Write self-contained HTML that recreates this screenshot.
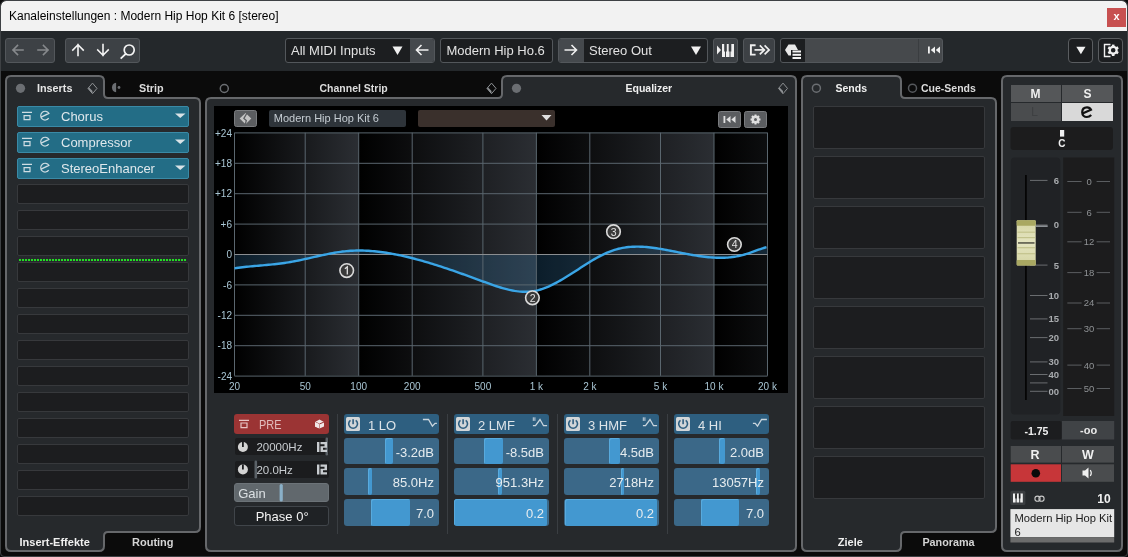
<!DOCTYPE html>
<html><head><meta charset="utf-8">
<style>
*{box-sizing:border-box;margin:0;padding:0}
html,body{width:1128px;height:557px;overflow:hidden;background:#0b0b0b;font-family:"Liberation Sans",sans-serif}
.a{position:absolute}
#root{position:absolute;left:0;top:0;width:1128px;height:557px;background:#0b0b0b;overflow:hidden;will-change:transform}
.tb{position:absolute;left:1px;top:1px;width:1126px;height:30px;background:#f2f2f2;border-radius:5px 5px 0 0}
.title{position:absolute;left:9px;top:9px;font-size:12px;color:#000;white-space:nowrap}
.close{position:absolute;left:1107px;top:8px;width:19px;height:19px;background:#c75050;color:#fff;font-size:11px;font-weight:bold;text-align:center;line-height:17px}
.toolbar{position:absolute;left:1px;top:31px;width:1126px;height:40px;background:#24282b}
.grp{position:absolute;top:38px;height:25px;border:1px solid #53575b;border-radius:3px;background:#3d4145;overflow:hidden}
.dk{background:#1c1e20}
.ttxt{position:absolute;top:4px;font-size:13px;color:#e2e2e2;white-space:nowrap}
.lbl{font-weight:bold;font-size:12px;color:#e6e6e6;position:absolute;white-space:nowrap}
.slot{position:absolute;left:17px;width:172px;height:20px;background:#1c1d1f;border:1px solid #37393c;border-radius:2px}
.ins{position:absolute;left:17px;width:172px;height:21px;background:#236d86;border:1px solid #3a8aa6;border-radius:2px;color:#dfe8ec;font-size:13px}
.send{position:absolute;left:813px;width:172px;height:43px;background:#1c1d1f;border:1px solid #37393c;border-radius:2px}
.bh{position:absolute;width:95px;height:20px;background:#2e5f80;border-radius:3px;color:#dde4e8;font-size:13px}
.sl{position:absolute;width:95px;height:26.5px;background:#3b6888;border-radius:3px;overflow:hidden;color:#e6ecef;font-size:13px}
.sl .v{position:absolute;right:5px;top:7px;white-space:nowrap}
.sl .h{position:absolute;top:0;height:26.5px;background:#4398d0;border-radius:2px;box-shadow:inset 1px 1px 0 #58aadd}
</style></head><body>
<div id="root">
<!-- title bar -->
<div class="tb"></div>
<div class="title">Kanaleinstellungen : Modern Hip Hop Kit 6 [stereo]</div>
<div class="close">x</div>
<!-- toolbar -->
<div class="toolbar"></div>

<div class="grp" style="left:5px;width:50px"></div>
<div class="grp" style="left:65px;width:75px"></div>
<svg class="a" style="left:0;top:31px" width="1128" height="40">
 <g fill="none" stroke-width="1.6" stroke-linecap="square">
  <g stroke="#86898c">
   <path d="M13 19 H23 M17.5 14.5 L13 19 L17.5 23.5"/>
   <path d="M38 19 H48 M43.5 14.5 L48 19 L43.5 23.5"/>
  </g>
  <g stroke="#f4f4f4">
   <path d="M78 13.5 V24.5 M72.8 19 L78 13.8 L83.2 19"/>
   <path d="M103 13.5 V24.5 M97.8 19 L103 24.2 L108.2 19"/>
   <circle cx="129.2" cy="19" r="5" stroke-width="1.7"/>
   <path d="M125.5 23 L121.3 27" stroke-width="1.8"/>
  </g>
 </g>
</svg>
<div class="grp dk" style="left:285px;width:150px"><div class="a" style="left:124px;top:0;width:25px;height:23px;background:#45494d"></div></div>
<div class="ttxt" style="left:291px;top:43px">All MIDI Inputs</div>
<div class="grp dk" style="left:440px;width:113px"></div>
<div class="ttxt" style="left:446.5px;top:43px">Modern Hip Ho.6</div>
<div class="grp dk" style="left:558px;width:150px"><div class="a" style="left:0;top:0;width:25px;height:23px;background:#45494d"></div></div>
<div class="ttxt" style="left:589px;top:43px">Stereo Out</div>
<div class="grp" style="left:713px;width:25px"></div>
<div class="grp" style="left:743px;width:32px"></div>
<div class="grp" style="left:780px;width:163px;background:#46494c"><div class="a" style="left:0;top:0;width:24px;height:23px;background:#1c1e20"></div><div class="a" style="left:137px;top:0;width:1px;height:23px;background:#3a3d40"></div></div>
<div class="grp dk" style="left:1068px;width:25px;border-color:#5a5d60;border-radius:4px"></div>
<div class="grp dk" style="left:1098px;width:25px;border-color:#5a5d60;border-radius:4px"></div>
<svg class="a" style="left:0;top:31px" width="1128" height="40">
 <g fill="#f0f0f0">
  <path d="M392.5 15.5 H402.5 L397.5 24 Z"/>
  <path d="M691 15.5 H701 L696 24 Z"/>
  <path d="M1076.3 15.8 H1085.5 L1080.9 23.3 Z"/>
 </g>
 <g fill="none" stroke="#f0f0f0" stroke-width="1.6">
  <path d="M416.5 19 H428.5 M421.5 14 L416.5 19 L421.5 24"/>
  <path d="M564.5 19 H576.5 M571.5 14 L576.5 19 L571.5 24"/>
 </g>
 <g fill="#f0f0f0">
  <path d="M717 14.5 L721 19 L717 23.5 Z"/>
  <rect x="722" y="13" width="3" height="13"/>
  <rect x="726" y="13" width="3.5" height="13"/>
  <rect x="730.5" y="13" width="3.5" height="13"/>
 </g>
 <g fill="#3d4145">
  <rect x="724.2" y="13" width="2.6" height="7.5"/>
  <rect x="728.7" y="13" width="2.6" height="7.5"/>
 </g>
 <g fill="none" stroke="#f0f0f0" stroke-width="1.9">
  <path d="M755.6 14.3 H750.9 V23.6 H755.6"/>
  <path d="M754.5 18.9 H764.5" stroke-width="1.7"/>
  <path d="M759.8 14.4 L764.3 18.9 L759.8 23.4 M764.6 14.4 L769.1 18.9 L764.6 23.4" stroke-width="1.7"/>
 </g>
 <g>
  <path d="M785 19 L788.5 13.5 H795 L798 19 L795 24.5 H788.5 Z" fill="#e8e8e8"/>
  <rect x="791" y="19" width="11" height="10" fill="#1c1e20"/>
  <g fill="#f4f4f4"><rect x="792.5" y="19.5" width="8.5" height="2"/><rect x="792.5" y="22.8" width="8.5" height="2"/><rect x="792.5" y="26" width="8.5" height="2"/></g>
 </g>
 <g fill="#f0f0f0">
  <rect x="928" y="15.5" width="1.8" height="7"/>
  <path d="M935 15.5 V22.5 L930.8 19 Z M940 15.5 V22.5 L935.8 19 Z"/>
 </g>
 <g fill="none" stroke="#f0f0f0" stroke-width="1.4">
  <path d="M1110.5 13.5 H1104.5 V25.5 H1110.5"/>
 </g>
 <g transform="translate(1113.2 19.3)">
  <circle r="3.4" fill="none" stroke="#f0f0f0" stroke-width="2.2"/>
  <g fill="#f0f0f0"><rect x="-1.3" y="-5.7" width="2.6" height="2.6" transform="rotate(0)"/><rect x="-1.3" y="-5.7" width="2.6" height="2.6" transform="rotate(60)"/><rect x="-1.3" y="-5.7" width="2.6" height="2.6" transform="rotate(120)"/><rect x="-1.3" y="-5.7" width="2.6" height="2.6" transform="rotate(180)"/><rect x="-1.3" y="-5.7" width="2.6" height="2.6" transform="rotate(240)"/><rect x="-1.3" y="-5.7" width="2.6" height="2.6" transform="rotate(300)"/></g>
 </g>
</svg>

<!-- panel outlines -->
<svg class="a" style="left:0;top:0" width="1128" height="557">
 <g fill="#26292c" stroke="#66686b" stroke-width="2">
  <!-- left inserts panel -->
  <path d="M6 81 Q6 76 11 76 L99 76 Q104 76 104 81 L104 94 Q104 98 108 98 L195 98 Q200 98 200 103 L200 527 Q200 532 195 532 L108 532 Q104 532 104 536 L104 546 Q104 551 99 551 L11 551 Q6 551 6 546 Z"/>
  <!-- EQ panel -->
  <path d="M206 103 Q206 98 211 98 L498 98 Q502 98 502 94 L502 81 Q502 76 507 76 L791 76 Q796 76 796 81 L796 546 Q796 551 791 551 L211 551 Q206 551 206 546 Z"/>
  <!-- sends panel -->
  <path d="M802 81 Q802 76 807 76 L896 76 Q901 76 901 81 L901 94 Q901 98 905 98 L991 98 Q996 98 996 103 L996 527 Q996 532 991 532 L905 532 Q901 532 901 536 L901 546 Q901 551 896 551 L807 551 Q802 551 802 546 Z"/>
  <!-- channel panel -->
  <path d="M1002 81 Q1002 76 1007 76 L1117 76 Q1122 76 1122 81 L1122 546 Q1122 551 1117 551 L1007 551 Q1002 551 1002 546 Z"/>
 </g>
</svg>

<!-- left panel content -->
<svg class="a" style="left:0;top:0" width="210" height="557">
 <circle cx="20.5" cy="88.3" r="4.6" fill="#6b6e72"/>
 <g transform="translate(92.5 88.4)"><path d="M0 -5.3 L4.5 0 L0 5.3 L-4.5 0 Z" fill="none" stroke="#8e9194" stroke-width="1"/><path d="M-4.5 0 L0 5.3 L0 2.6 L-3.6 -1.1 Z" fill="#8e9194"/></g>
 <path d="M116.1 82.7 A4.8 4.8 0 0 0 116.1 92.2 Z" fill="#6b6e72"/>
 <circle cx="119" cy="87.5" r="1.4" fill="#6b6e72"/>
</svg>
<div class="lbl" style="left:37px;top:82px;font-size:10.8px">Inserts</div>
<div class="lbl" style="left:139px;top:82px;font-size:10.8px;color:#dcdcdc">Strip</div>
<div class="ins" style="top:106px"><div class="a" style="left:43px;top:2px">Chorus</div></div>
<div class="ins" style="top:132px"><div class="a" style="left:43px;top:2px">Compressor</div></div>
<div class="ins" style="top:158px"><div class="a" style="left:43px;top:2px">StereoEnhancer</div></div>
<svg class="a" style="left:0;top:0" width="210" height="557"><g fill="none" stroke="#cfdde3" stroke-width="1.2"><path d="M22 112.4 H32 M24.1 115.6 H30 V119.6 H24.1 Z"/><path d="M40.6 117.4 L48.9 113.4 A4.4 4.4 0 1 0 48.7 118.2"/><path d="M22 138.4 H32 M24.1 141.6 H30 V145.6 H24.1 Z"/><path d="M40.6 143.4 L48.9 139.4 A4.4 4.4 0 1 0 48.7 144.2"/><path d="M22 164.4 H32 M24.1 167.6 H30 V171.6 H24.1 Z"/><path d="M40.6 169.4 L48.9 165.4 A4.4 4.4 0 1 0 48.7 170.2"/></g><g fill="#d9e3e7"><path d="M175 113.5 H185.5 L180.25 118 Z"/><path d="M175 139.5 H185.5 L180.25 144 Z"/><path d="M175 165.5 H185.5 L180.25 170 Z"/></g></svg>
<div class="slot" style="top:184px"></div>
<div class="slot" style="top:210px"></div>
<div class="slot" style="top:236px"></div>
<div class="slot" style="top:262px"></div>
<div class="slot" style="top:288px"></div>
<div class="slot" style="top:314px"></div>
<div class="slot" style="top:340px"></div>
<div class="slot" style="top:366px"></div>
<div class="slot" style="top:392px"></div>
<div class="slot" style="top:418px"></div>
<div class="slot" style="top:444px"></div>
<div class="slot" style="top:470px"></div>
<div class="slot" style="top:496px"></div>
<div class="a" style="left:19px;top:259px;width:168px;height:2px;background:repeating-linear-gradient(90deg,#22e022 0 1.5px,transparent 1.5px 3px)"></div>
<div class="lbl" style="left:19.5px;top:536px;font-size:11px;color:#f0f0f0">Insert-Effekte</div>
<div class="lbl" style="left:132px;top:536px;font-size:11px;color:#d4d4d4">Routing</div>

<!-- EQ -->
<svg class="a" style="left:0;top:0" width="1128" height="557">
<defs><linearGradient id="dg" x1="0" x2="1" y1="0" y2="0"><stop offset="0" stop-color="#000"/><stop offset="1" stop-color="#2b2e33"/></linearGradient></defs>
<rect x="214" y="106" width="574" height="287" fill="#000"/>
<svg x="234.5" y="132.7" width="533.0" height="243.1" overflow="hidden"><rect x="0.0" y="0" width="124.2" height="243.1" fill="url(#dg)"/><rect x="124.2" y="0" width="177.7" height="243.1" fill="url(#dg)"/><rect x="301.9" y="0" width="177.7" height="243.1" fill="url(#dg)"/><rect x="479.5" y="0" width="177.7" height="243.1" fill="url(#dg)"/></svg>
<path d="M234.5 268.33 L236.5 268.03 L238.5 267.75 L240.5 267.49 L242.5 267.25 L244.5 267.02 L246.5 266.80 L248.5 266.60 L250.5 266.40 L252.5 266.22 L254.5 266.04 L256.5 265.86 L258.5 265.69 L260.5 265.51 L262.5 265.34 L264.5 265.17 L266.5 264.99 L268.5 264.81 L270.5 264.62 L272.5 264.42 L274.5 264.21 L276.5 263.99 L278.5 263.76 L280.5 263.51 L282.5 263.24 L284.5 262.96 L286.5 262.66 L288.5 262.33 L290.5 261.99 L292.5 261.63 L294.5 261.26 L296.5 260.87 L298.5 260.47 L300.5 260.06 L302.5 259.63 L304.5 259.20 L306.5 258.76 L308.5 258.31 L310.5 257.86 L312.5 257.40 L314.5 256.94 L316.5 256.49 L318.5 256.04 L320.5 255.59 L322.5 255.15 L324.5 254.72 L326.5 254.30 L328.5 253.89 L330.5 253.50 L332.5 253.12 L334.5 252.76 L336.5 252.43 L338.5 252.11 L340.5 251.82 L342.5 251.56 L344.5 251.32 L346.5 251.12 L348.5 250.94 L350.5 250.80 L352.5 250.69 L354.5 250.60 L356.5 250.55 L358.5 250.52 L360.5 250.53 L362.5 250.56 L364.5 250.61 L366.5 250.70 L368.5 250.80 L370.5 250.94 L372.5 251.09 L374.5 251.27 L376.5 251.47 L378.5 251.70 L380.5 251.94 L382.5 252.21 L384.5 252.50 L386.5 252.80 L388.5 253.13 L390.5 253.47 L392.5 253.83 L394.5 254.21 L396.5 254.60 L398.5 255.01 L400.5 255.43 L402.5 255.87 L404.5 256.32 L406.5 256.79 L408.5 257.27 L410.5 257.76 L412.5 258.26 L414.5 258.78 L416.5 259.31 L418.5 259.85 L420.5 260.40 L422.5 260.96 L424.5 261.54 L426.5 262.12 L428.5 262.71 L430.5 263.32 L432.5 263.93 L434.5 264.55 L436.5 265.18 L438.5 265.82 L440.5 266.47 L442.5 267.12 L444.5 267.78 L446.5 268.45 L448.5 269.12 L450.5 269.80 L452.5 270.49 L454.5 271.18 L456.5 271.88 L458.5 272.58 L460.5 273.29 L462.5 274.00 L464.5 274.71 L466.5 275.43 L468.5 276.15 L470.5 276.88 L472.5 277.60 L474.5 278.33 L476.5 279.06 L478.5 279.80 L480.5 280.53 L482.5 281.26 L484.5 282.00 L486.5 282.73 L488.5 283.46 L490.5 284.17 L492.5 284.88 L494.5 285.57 L496.5 286.24 L498.5 286.88 L500.5 287.50 L502.5 288.10 L504.5 288.66 L506.5 289.18 L508.5 289.67 L510.5 290.11 L512.5 290.51 L514.5 290.86 L516.5 291.16 L518.5 291.40 L520.5 291.58 L522.5 291.71 L524.5 291.76 L526.5 291.75 L528.5 291.67 L530.5 291.51 L532.5 291.28 L534.5 290.96 L536.5 290.56 L538.5 290.07 L540.5 289.51 L542.5 288.87 L544.5 288.16 L546.5 287.38 L548.5 286.54 L550.5 285.64 L552.5 284.69 L554.5 283.69 L556.5 282.64 L558.5 281.54 L560.5 280.41 L562.5 279.24 L564.5 278.05 L566.5 276.82 L568.5 275.57 L570.5 274.31 L572.5 273.03 L574.5 271.74 L576.5 270.44 L578.5 269.14 L580.5 267.84 L582.5 266.55 L584.5 265.27 L586.5 264.00 L588.5 262.74 L590.5 261.51 L592.5 260.31 L594.5 259.13 L596.5 257.99 L598.5 256.89 L600.5 255.82 L602.5 254.81 L604.5 253.84 L606.5 252.93 L608.5 252.07 L610.5 251.28 L612.5 250.55 L614.5 249.89 L616.5 249.30 L618.5 248.78 L620.5 248.32 L622.5 247.92 L624.5 247.58 L626.5 247.29 L628.5 247.06 L630.5 246.89 L632.5 246.76 L634.5 246.68 L636.5 246.64 L638.5 246.65 L640.5 246.70 L642.5 246.79 L644.5 246.91 L646.5 247.06 L648.5 247.25 L650.5 247.47 L652.5 247.71 L654.5 247.98 L656.5 248.27 L658.5 248.58 L660.5 248.90 L662.5 249.25 L664.5 249.60 L666.5 249.97 L668.5 250.35 L670.5 250.73 L672.5 251.12 L674.5 251.52 L676.5 251.92 L678.5 252.32 L680.5 252.72 L682.5 253.11 L684.5 253.51 L686.5 253.89 L688.5 254.27 L690.5 254.64 L692.5 255.00 L694.5 255.34 L696.5 255.67 L698.5 255.98 L700.5 256.28 L702.5 256.55 L704.5 256.80 L706.5 257.03 L708.5 257.23 L710.5 257.40 L712.5 257.54 L714.5 257.66 L716.5 257.74 L718.5 257.78 L720.5 257.79 L722.5 257.76 L724.5 257.69 L726.5 257.58 L728.5 257.43 L730.5 257.23 L732.5 256.98 L734.5 256.69 L736.5 256.36 L738.5 255.97 L740.5 255.53 L742.5 255.05 L744.5 254.51 L746.5 253.92 L748.5 253.28 L750.5 252.60 L752.5 251.88 L754.5 251.16 L756.5 250.43 L758.5 249.71 L760.5 249.02 L762.5 248.36 L764.5 247.76 L766.5 247.21 L767.5 254.5 L234.5 254.5 Z" fill="rgba(60,150,215,0.2)"/>
<path d="M234.5 132.9 H767.5 M234.5 163.3 H767.5 M234.5 193.7 H767.5 M234.5 224.1 H767.5 M234.5 284.9 H767.5 M234.5 315.3 H767.5 M234.5 345.7 H767.5 M234.5 376.1 H767.5 M234.5 132.7 V375.8 M305.2 132.7 V375.8 M358.7 132.7 V375.8 M412.2 132.7 V375.8 M482.9 132.7 V375.8 M536.4 132.7 V375.8 M589.8 132.7 V375.8 M660.5 132.7 V375.8 M714.0 132.7 V375.8 M767.5 132.7 V375.8" stroke="#5a666e" stroke-width="1" fill="none"/>
<path d="M234.5 254.5 H767.5" stroke="#8b8e91" stroke-width="1.2"/>
<path d="M234.5 268.33 L236.5 268.03 L238.5 267.75 L240.5 267.49 L242.5 267.25 L244.5 267.02 L246.5 266.80 L248.5 266.60 L250.5 266.40 L252.5 266.22 L254.5 266.04 L256.5 265.86 L258.5 265.69 L260.5 265.51 L262.5 265.34 L264.5 265.17 L266.5 264.99 L268.5 264.81 L270.5 264.62 L272.5 264.42 L274.5 264.21 L276.5 263.99 L278.5 263.76 L280.5 263.51 L282.5 263.24 L284.5 262.96 L286.5 262.66 L288.5 262.33 L290.5 261.99 L292.5 261.63 L294.5 261.26 L296.5 260.87 L298.5 260.47 L300.5 260.06 L302.5 259.63 L304.5 259.20 L306.5 258.76 L308.5 258.31 L310.5 257.86 L312.5 257.40 L314.5 256.94 L316.5 256.49 L318.5 256.04 L320.5 255.59 L322.5 255.15 L324.5 254.72 L326.5 254.30 L328.5 253.89 L330.5 253.50 L332.5 253.12 L334.5 252.76 L336.5 252.43 L338.5 252.11 L340.5 251.82 L342.5 251.56 L344.5 251.32 L346.5 251.12 L348.5 250.94 L350.5 250.80 L352.5 250.69 L354.5 250.60 L356.5 250.55 L358.5 250.52 L360.5 250.53 L362.5 250.56 L364.5 250.61 L366.5 250.70 L368.5 250.80 L370.5 250.94 L372.5 251.09 L374.5 251.27 L376.5 251.47 L378.5 251.70 L380.5 251.94 L382.5 252.21 L384.5 252.50 L386.5 252.80 L388.5 253.13 L390.5 253.47 L392.5 253.83 L394.5 254.21 L396.5 254.60 L398.5 255.01 L400.5 255.43 L402.5 255.87 L404.5 256.32 L406.5 256.79 L408.5 257.27 L410.5 257.76 L412.5 258.26 L414.5 258.78 L416.5 259.31 L418.5 259.85 L420.5 260.40 L422.5 260.96 L424.5 261.54 L426.5 262.12 L428.5 262.71 L430.5 263.32 L432.5 263.93 L434.5 264.55 L436.5 265.18 L438.5 265.82 L440.5 266.47 L442.5 267.12 L444.5 267.78 L446.5 268.45 L448.5 269.12 L450.5 269.80 L452.5 270.49 L454.5 271.18 L456.5 271.88 L458.5 272.58 L460.5 273.29 L462.5 274.00 L464.5 274.71 L466.5 275.43 L468.5 276.15 L470.5 276.88 L472.5 277.60 L474.5 278.33 L476.5 279.06 L478.5 279.80 L480.5 280.53 L482.5 281.26 L484.5 282.00 L486.5 282.73 L488.5 283.46 L490.5 284.17 L492.5 284.88 L494.5 285.57 L496.5 286.24 L498.5 286.88 L500.5 287.50 L502.5 288.10 L504.5 288.66 L506.5 289.18 L508.5 289.67 L510.5 290.11 L512.5 290.51 L514.5 290.86 L516.5 291.16 L518.5 291.40 L520.5 291.58 L522.5 291.71 L524.5 291.76 L526.5 291.75 L528.5 291.67 L530.5 291.51 L532.5 291.28 L534.5 290.96 L536.5 290.56 L538.5 290.07 L540.5 289.51 L542.5 288.87 L544.5 288.16 L546.5 287.38 L548.5 286.54 L550.5 285.64 L552.5 284.69 L554.5 283.69 L556.5 282.64 L558.5 281.54 L560.5 280.41 L562.5 279.24 L564.5 278.05 L566.5 276.82 L568.5 275.57 L570.5 274.31 L572.5 273.03 L574.5 271.74 L576.5 270.44 L578.5 269.14 L580.5 267.84 L582.5 266.55 L584.5 265.27 L586.5 264.00 L588.5 262.74 L590.5 261.51 L592.5 260.31 L594.5 259.13 L596.5 257.99 L598.5 256.89 L600.5 255.82 L602.5 254.81 L604.5 253.84 L606.5 252.93 L608.5 252.07 L610.5 251.28 L612.5 250.55 L614.5 249.89 L616.5 249.30 L618.5 248.78 L620.5 248.32 L622.5 247.92 L624.5 247.58 L626.5 247.29 L628.5 247.06 L630.5 246.89 L632.5 246.76 L634.5 246.68 L636.5 246.64 L638.5 246.65 L640.5 246.70 L642.5 246.79 L644.5 246.91 L646.5 247.06 L648.5 247.25 L650.5 247.47 L652.5 247.71 L654.5 247.98 L656.5 248.27 L658.5 248.58 L660.5 248.90 L662.5 249.25 L664.5 249.60 L666.5 249.97 L668.5 250.35 L670.5 250.73 L672.5 251.12 L674.5 251.52 L676.5 251.92 L678.5 252.32 L680.5 252.72 L682.5 253.11 L684.5 253.51 L686.5 253.89 L688.5 254.27 L690.5 254.64 L692.5 255.00 L694.5 255.34 L696.5 255.67 L698.5 255.98 L700.5 256.28 L702.5 256.55 L704.5 256.80 L706.5 257.03 L708.5 257.23 L710.5 257.40 L712.5 257.54 L714.5 257.66 L716.5 257.74 L718.5 257.78 L720.5 257.79 L722.5 257.76 L724.5 257.69 L726.5 257.58 L728.5 257.43 L730.5 257.23 L732.5 256.98 L734.5 256.69 L736.5 256.36 L738.5 255.97 L740.5 255.53 L742.5 255.05 L744.5 254.51 L746.5 253.92 L748.5 253.28 L750.5 252.60 L752.5 251.88 L754.5 251.16 L756.5 250.43 L758.5 249.71 L760.5 249.02 L762.5 248.36 L764.5 247.76 L766.5 247.21" stroke="#3aa5e6" stroke-width="2.4" stroke-linejoin="round" fill="none"/>
<g font-family="Liberation Sans" font-size="10" fill="#a9c6d4" text-anchor="end">
<text x="232" y="136.5">+24</text>
<text x="232" y="166.9">+18</text>
<text x="232" y="197.3">+12</text>
<text x="232" y="227.7">+6</text>
<text x="232" y="258.1">0</text>
<text x="232" y="288.5">-6</text>
<text x="232" y="318.9">-12</text>
<text x="232" y="349.3">-18</text>
<text x="232" y="379.7">-24</text>
</g><g font-family="Liberation Sans" font-size="10" fill="#a9c6d4" text-anchor="middle">
<text x="234.5" y="390">20</text>
<text x="305.2" y="390">50</text>
<text x="358.7" y="390">100</text>
<text x="412.2" y="390">200</text>
<text x="482.9" y="390">500</text>
<text x="536.4" y="390">1 k</text>
<text x="589.8" y="390">2 k</text>
<text x="660.5" y="390">5 k</text>
<text x="714.0" y="390">10 k</text>
<text x="767.5" y="390">20 k</text>
</g>
<circle cx="346.7" cy="270.6" r="6.8" fill="#3a3a3a" stroke="#dadada" stroke-width="1.6"/><path d="M344.9 268.8 L347.3 266.8 V274.6" stroke="#e2e2e2" stroke-width="1.3" fill="none"/>
<circle cx="532.4" cy="297.8" r="6.8" fill="#3a3a3a" stroke="#dadada" stroke-width="1.6"/><text x="532.6" y="301.6" font-family="Liberation Sans" font-size="10.5" fill="#e2e2e2" text-anchor="middle">2</text>
<circle cx="613.5" cy="231.7" r="6.8" fill="#3a3a3a" stroke="#dadada" stroke-width="1.6"/><text x="613.7" y="235.5" font-family="Liberation Sans" font-size="10.5" fill="#e2e2e2" text-anchor="middle">3</text>
<circle cx="734.4" cy="244.5" r="6.8" fill="#3a3a3a" stroke="#dadada" stroke-width="1.6"/><text x="734.6" y="248.3" font-family="Liberation Sans" font-size="10.5" fill="#e2e2e2" text-anchor="middle">4</text>
<rect x="234.5" y="110.5" width="22" height="16" rx="2" fill="#5b5d60" stroke="#7a7c7f"/>
<path d="M245.6 112.9 L251.3 118.5 L245.6 124.2 L239.6 118.5 Z" fill="#c4c4c4"/><path d="M247.3 112.5 L243.9 118.4 L246.3 120.4 L245.2 124.8" stroke="#5b5d60" stroke-width="1.3" fill="none"/>
<rect x="269" y="110" width="137" height="17" rx="2" fill="#2e343a"/>
<rect x="418" y="110" width="137" height="17" rx="2" fill="#3a302c"/>
<path d="M541.5 115 H551.5 L546.5 120.5 Z" fill="#e0e0e0"/>
<rect x="718.5" y="111.5" width="22" height="16" rx="2" fill="#5b5d60" stroke="#7a7c7f"/>
<rect x="744.5" y="111.5" width="22" height="16" rx="2" fill="#5b5d60" stroke="#7a7c7f"/>
<g fill="#e0e0e0"><rect x="723.5" y="116" width="1.8" height="7"/><path d="M730.5 116 V123 L726.3 119.5 Z M735.5 116 V123 L731.3 119.5 Z"/></g>
<g transform="translate(755.5 119.5)"><circle r="3.2" fill="none" stroke="#e0e0e0" stroke-width="1.6"/><g fill="#e0e0e0"><rect x="-1" y="-5" width="2" height="10"/><rect x="-1" y="-5" width="2" height="10" transform="rotate(45)"/><rect x="-1" y="-5" width="2" height="10" transform="rotate(90)"/><rect x="-1" y="-5" width="2" height="10" transform="rotate(135)"/></g><circle r="1.5" fill="#5b5d60"/></g>
<circle cx="224.3" cy="88.5" r="4" fill="none" stroke="#6b6e72" stroke-width="1.5"/>
<circle cx="516.5" cy="88.3" r="4.6" fill="#6b6e72"/>
<g transform="translate(491.5 88.4)"><path d="M0 -5.3 L4.5 0 L0 5.3 L-4.5 0 Z" fill="none" stroke="#8e9194" stroke-width="1"/><path d="M-4.5 0 L0 5.3 L0 2.6 L-3.6 -1.1 Z" fill="#8e9194"/></g>
<g transform="translate(783 88.4)"><path d="M0 -5.3 L4.5 0 L0 5.3 L-4.5 0 Z" fill="none" stroke="#8e9194" stroke-width="1"/><path d="M-4.5 0 L0 5.3 L0 2.6 L-3.6 -1.1 Z" fill="#8e9194"/></g>
</svg>
<div class="lbl" style="left:319.5px;top:82px;font-size:10.5px;color:#dcdcdc">Channel Strip</div>
<div class="lbl" style="left:625.5px;top:82px;font-size:10.5px;color:#f0f0f0">Equalizer</div>
<div class="a" style="left:273.8px;top:112px;font-size:11px;color:#c5ccd2;white-space:nowrap">Modern Hip Hop Kit 6</div>
<!-- EQ bottom -->
<svg class="a" style="left:0;top:0" width="1128" height="557">
<rect x="337.0" y="414" width="1" height="120" fill="#3a3e42"/>
<rect x="447.0" y="414" width="1" height="120" fill="#3a3e42"/>
<rect x="557.0" y="414" width="1" height="120" fill="#3a3e42"/>
<rect x="667.0" y="414" width="1" height="120" fill="#3a3e42"/>
<rect x="234" y="414" width="95" height="20" rx="3" fill="#9b3434"/>
<g fill="none" stroke="#e8c4c4" stroke-width="1.2"><path d="M239 420.4 H249 M241 423 H247 V427.6 H241 Z"/></g>
<g transform="translate(319.5 424)"><path d="M0 -4.5 L4.5 -2 L4.5 2.5 L0 4.5 L-4.5 2.5 L-4.5 -2 Z" fill="#f0e8e8"/><path d="M-4.5 -2 L0 0 L4.5 -2 M0 0 V4.5" stroke="#9b3434" stroke-width="1" fill="none"/><path d="M-4.5 -2 L0 0 L0 4.5 L-4.5 2.5 Z" fill="#f0e8e8"/></g>
<rect x="235" y="438" width="94" height="17" rx="2" fill="#1b1c1e"/>
<rect x="235" y="461" width="94" height="17" rx="2" fill="#1b1c1e"/>
<rect x="325.5" y="437.5" width="2.6" height="18" rx="1.3" fill="#5a6167"/>
<rect x="254.5" y="460.5" width="2.6" height="18" rx="1.3" fill="#5a6167"/>
<circle cx="242.9" cy="447" r="5" fill="#d4d4d4"/><rect x="242" y="442" width="1.8" height="5" fill="#1b1c1e"/>
<g fill="#c8ccd0"><rect x="317" y="442" width="2.4" height="10"/><path d="M320.5 442 H327 V447.8 H323 V449.8 H327 V452 H320.5 V446.2 H324.5 V444.2 H320.5 Z"/></g>
<circle cx="242.9" cy="469.5" r="5" fill="#d4d4d4"/><rect x="242" y="464.5" width="1.8" height="5" fill="#1b1c1e"/>
<g fill="#c8ccd0"><rect x="317" y="464.5" width="2.4" height="10"/><path d="M320.5 464.5 H327 V470.3 H323 V472.3 H327 V474.5 H320.5 V468.7 H324.5 V466.7 H320.5 Z"/></g>
<rect x="234.5" y="483.5" width="94" height="18" rx="2.5" fill="#61686d" stroke="#6c7378"/>
<rect x="279.6" y="484" width="3.2" height="17.5" rx="1.5" fill="#8ab0c8"/>
<rect x="234.5" y="506.5" width="94" height="19" rx="2.5" fill="#1f2225" stroke="#40454a"/>
<rect x="344" y="414" width="95" height="20" rx="3" fill="#2e5f80"/>
<rect x="346" y="417" width="14" height="14" rx="1.5" fill="#d2d6d8"/>

<rect x="454" y="414" width="95" height="20" rx="3" fill="#2e5f80"/>
<rect x="456" y="417" width="14" height="14" rx="1.5" fill="#d2d6d8"/>

<rect x="564" y="414" width="95" height="20" rx="3" fill="#2e5f80"/>
<rect x="566" y="417" width="14" height="14" rx="1.5" fill="#d2d6d8"/>

<rect x="674" y="414" width="95" height="20" rx="3" fill="#2e5f80"/>
<rect x="676" y="417" width="14" height="14" rx="1.5" fill="#d2d6d8"/>

<g fill="none" stroke="#c9d5dd" stroke-width="1.3"><path d="M422.9 419.5 H428.5 L432.4 426.2 L435 423.4 H436.9"/><path d="M532.9 425.7 H535.5 L540 419.5 L543.5 425.7 H547.1"/><path d="M533.3 417.3 V420.9 M534.9 417.3 V420.9" stroke-width="1"/><path d="M642.9 425.7 H645.5 L650 419.5 L653.5 425.7 H657.1"/><path d="M643.3 417.3 V420.9 M644.9 417.3 V420.9" stroke-width="1"/><path d="M752.9 423.4 H755.3 L757.5 426.2 L761.6 419.5 H766.9"/></g><path d="M350.5 420.3 A4.4 4.4 0 1 0 355.7 420.3" fill="none" stroke="#2e5f80" stroke-width="1.6"/><rect x="352.3" y="419.2" width="1.6" height="5" fill="#2e5f80"/><path d="M460.5 420.3 A4.4 4.4 0 1 0 465.7 420.3" fill="none" stroke="#2e5f80" stroke-width="1.6"/><rect x="462.3" y="419.2" width="1.6" height="5" fill="#2e5f80"/><path d="M570.5 420.3 A4.4 4.4 0 1 0 575.7 420.3" fill="none" stroke="#2e5f80" stroke-width="1.6"/><rect x="572.3" y="419.2" width="1.6" height="5" fill="#2e5f80"/><path d="M680.5 420.3 A4.4 4.4 0 1 0 685.7 420.3" fill="none" stroke="#2e5f80" stroke-width="1.6"/><rect x="682.3" y="419.2" width="1.6" height="5" fill="#2e5f80"/>
</svg>
<div class="a" style="left:258.5px;top:417px;font-size:13px;color:#e2bcbc;transform:scaleX(.84);transform-origin:0 0">PRE</div>
<div class="a" style="left:256.4px;top:441px;font-size:11.5px;color:#c8ccd0">20000Hz</div>
<div class="a" style="left:256.4px;top:464px;font-size:11.5px;color:#c8ccd0">20.0Hz</div>
<div class="a" style="left:238.2px;top:486px;font-size:13px;color:#dbe0e3">Gain</div>
<div class="a" style="left:255.7px;top:509px;font-size:13px;color:#f2f2f2">Phase 0°</div>
<div class="a" style="left:368px;top:418px;font-size:13px;color:#dde4e8;white-space:nowrap">1 LO</div>
<div class="a" style="left:478px;top:418px;font-size:13px;color:#dde4e8;white-space:nowrap">2 LMF</div>
<div class="a" style="left:588px;top:418px;font-size:13px;color:#dde4e8;white-space:nowrap">3 HMF</div>
<div class="a" style="left:698px;top:418px;font-size:13px;color:#dde4e8;white-space:nowrap">4 HI</div>
<div class="sl" style="left:344px;top:437.5px"><div class="h" style="left:41.2px;width:7.6px"></div><div class="v">-3.2dB</div></div>
<div class="sl" style="left:344px;top:468px"><div class="h" style="left:24.4px;width:3.3px"></div><div class="v">85.0Hz</div></div>
<div class="sl" style="left:344px;top:499.3px"><div class="h" style="left:27.2px;width:38.5px"></div><div class="v">7.0</div></div>
<div class="sl" style="left:454px;top:437.5px"><div class="h" style="left:30.0px;width:19px"></div><div class="v">-8.5dB</div></div>
<div class="sl" style="left:454px;top:468px"><div class="h" style="left:44.4px;width:3.2px"></div><div class="v">951.3Hz</div></div>
<div class="sl" style="left:454px;top:499.3px"><div class="h" style="left:0.0px;width:93px"></div><div class="v">0.2</div></div>
<div class="sl" style="left:564px;top:437.5px"><div class="h" style="left:45.0px;width:10.7px"></div><div class="v">4.5dB</div></div>
<div class="sl" style="left:564px;top:468px"><div class="h" style="left:57.3px;width:3.2px"></div><div class="v">2718Hz</div></div>
<div class="sl" style="left:564px;top:499.3px"><div class="h" style="left:0.5px;width:92.5px"></div><div class="v">0.2</div></div>
<div class="sl" style="left:674px;top:437.5px"><div class="h" style="left:45.3px;width:5.4px"></div><div class="v">2.0dB</div></div>
<div class="sl" style="left:674px;top:468px"><div class="h" style="left:82.0px;width:3.8px"></div><div class="v">13057Hz</div></div>
<div class="sl" style="left:674px;top:499.3px"><div class="h" style="left:27.0px;width:38.4px"></div><div class="v">7.0</div></div>
<!-- sends -->
<svg class="a" style="left:0;top:0" width="1128" height="557">
<circle cx="816.4" cy="88.2" r="4" fill="none" stroke="#6b6e72" stroke-width="1.5"/>
<circle cx="912.5" cy="88.2" r="4" fill="none" stroke="#55585c" stroke-width="1.5"/>
</svg>
<div class="send" style="top:106px"></div>
<div class="send" style="top:156px"></div>
<div class="send" style="top:206px"></div>
<div class="send" style="top:256px"></div>
<div class="send" style="top:306px"></div>
<div class="send" style="top:356px"></div>
<div class="send" style="top:406px"></div>
<div class="send" style="top:456px"></div>
<div class="lbl" style="left:835.5px;top:82px;font-size:10.5px;color:#f0f0f0">Sends</div>
<div class="lbl" style="left:921px;top:82px;font-size:10.5px;color:#dcdcdc">Cue-Sends</div>
<div class="lbl" style="left:837.8px;top:536px;font-size:11px;color:#f0f0f0">Ziele</div>
<div class="lbl" style="left:922.4px;top:536px;font-size:10.8px;color:#d4d4d4">Panorama</div>
<!-- channel -->
<svg class="a" style="left:0;top:0" width="1128" height="557">
<rect x="1011" y="85" width="50" height="17" fill="#555759"/>
<rect x="1062" y="85" width="51" height="17" fill="#555759"/>
<rect x="1011" y="103" width="50" height="18" fill="#4a4c4e"/>
<rect x="1062" y="103" width="51" height="18" fill="#d9d9d9"/>
<rect x="1010.5" y="127" width="102.5" height="23" rx="3" fill="#1c1c1d"/>
<rect x="1060" y="130" width="4.2" height="6.6" fill="#f0f0f0"/>
<rect x="1010.8" y="157.5" width="49.5" height="257" rx="4" fill="#202225"/>

<rect x="1063.2" y="157.5" width="51" height="258.5" fill="#1c1c1d"/>
<rect x="1025" y="175" width="1.8" height="225" fill="#050505"/>
<rect x="1030" y="179.9" width="17.5" height="1" fill="#6a6d70"/>
<rect x="1030" y="224.5" width="17.5" height="1" fill="#6a6d70"/>
<rect x="1030" y="264.6" width="17.5" height="1" fill="#6a6d70"/>
<rect x="1030" y="295.0" width="17.5" height="1" fill="#6a6d70"/>
<rect x="1030" y="318.4" width="17.5" height="1" fill="#6a6d70"/>
<rect x="1030" y="337.1" width="17.5" height="1" fill="#6a6d70"/>
<rect x="1030" y="361.4" width="17.5" height="1" fill="#6a6d70"/>
<rect x="1030" y="374.0" width="17.5" height="1" fill="#6a6d70"/>
<rect x="1030" y="382.4" width="17.5" height="1" fill="#6a6d70"/>
<rect x="1030" y="390.8" width="17.5" height="1" fill="#6a6d70"/>
<g font-family="Liberation Sans" font-size="9.5" font-weight="bold" fill="#a8abae" text-anchor="end">
<text x="1059" y="183.8">6</text>
<text x="1059" y="228.4">0</text>
<text x="1059" y="268.5">5</text>
<text x="1059" y="298.9">10</text>
<text x="1059" y="322.3">15</text>
<text x="1059" y="341.0">20</text>
<text x="1059" y="365.3">30</text>
<text x="1059" y="377.9">40</text>
<text x="1059" y="394.7">00</text>
</g>
<rect x="1067.3" y="181.0" width="14.3" height="1" fill="#5a5d60"/><rect x="1096.6" y="181.0" width="13.4" height="1" fill="#5a5d60"/>
<rect x="1067.3" y="211.8" width="14.3" height="1" fill="#5a5d60"/><rect x="1096.6" y="211.8" width="13.4" height="1" fill="#5a5d60"/>
<rect x="1067.3" y="241.3" width="14.3" height="1" fill="#5a5d60"/><rect x="1096.6" y="241.3" width="13.4" height="1" fill="#5a5d60"/>
<rect x="1067.3" y="272.1" width="14.3" height="1" fill="#5a5d60"/><rect x="1096.6" y="272.1" width="13.4" height="1" fill="#5a5d60"/>
<rect x="1067.3" y="302.5" width="14.3" height="1" fill="#5a5d60"/><rect x="1096.6" y="302.5" width="13.4" height="1" fill="#5a5d60"/>
<rect x="1067.3" y="328.2" width="14.3" height="1" fill="#5a5d60"/><rect x="1096.6" y="328.2" width="13.4" height="1" fill="#5a5d60"/>
<rect x="1067.3" y="364.6" width="14.3" height="1" fill="#5a5d60"/><rect x="1096.6" y="364.6" width="13.4" height="1" fill="#5a5d60"/>
<rect x="1067.3" y="388.0" width="14.3" height="1" fill="#5a5d60"/><rect x="1096.6" y="388.0" width="13.4" height="1" fill="#5a5d60"/>
<g font-family="Liberation Sans" font-size="9.5" fill="#8e9194" text-anchor="middle">
<text x="1089.1" y="184.9">0</text>
<text x="1089.1" y="215.7">6</text>
<text x="1089.1" y="245.2">12</text>
<text x="1089.1" y="276.0">18</text>
<text x="1089.1" y="306.4">24</text>
<text x="1089.1" y="332.1">30</text>
<text x="1089.1" y="368.5">40</text>
<text x="1089.1" y="391.9">50</text>
</g>
<defs><linearGradient id="fc" x1="0" x2="0" y1="0" y2="1"><stop offset="0" stop-color="#d6d6a6"/><stop offset="0.5" stop-color="#e4e4c0"/><stop offset="1" stop-color="#d4d4a2"/></linearGradient></defs><rect x="1016.7" y="220.3" width="19" height="45.1" rx="1" fill="url(#fc)"/><rect x="1016.7" y="220.3" width="19" height="5.4" rx="1" fill="#a9a862"/><rect x="1016.7" y="260.1" width="19" height="5.3" rx="1" fill="#a9a862"/><g fill="#c2c28c"><rect x="1017.5" y="231.6" width="17.4" height="1.2"/><rect x="1017.5" y="237.0" width="17.4" height="1.2"/><rect x="1017.5" y="247.1" width="17.4" height="1.2"/><rect x="1017.5" y="253.1" width="17.4" height="1.2"/></g><rect x="1018" y="242.3" width="16.5" height="1.3" fill="#3a3a30"/><rect x="1035.7" y="225.6" width="12" height="1.1" fill="#b8bec4"/>
<rect x="1010.7" y="421" width="50.8" height="18.5" rx="2" fill="#1c1d1f"/>
<rect x="1062" y="421" width="52.2" height="18.5" fill="#404346"/>
<rect x="1010.7" y="446" width="50.3" height="16.6" fill="#4a4c4e"/>
<rect x="1062" y="446" width="52" height="16.6" fill="#4a4c4e"/>
<rect x="1010.7" y="464.3" width="50.3" height="17.5" fill="#c73639"/>
<rect x="1062" y="464.3" width="52" height="17.5" fill="#4a4c4e"/>
<circle cx="1035.8" cy="473.2" r="4.3" fill="#0a0a0a"/>
<path d="M1082.5 470.5 H1085 L1088.5 467.5 V478.5 L1085 475.5 H1082.5 Z" fill="#f0f0f0"/><path d="M1090.3 470 Q1092.3 473 1090.3 476" stroke="#f0f0f0" stroke-width="1.2" fill="none"/>
<rect x="1010.4" y="490.8" width="15" height="14.2" rx="1.5" fill="#3a3d40"/>
<g fill="#f0f0f0"><rect x="1013" y="493.5" width="2.6" height="9"/><rect x="1016.6" y="493.5" width="2.6" height="9"/><rect x="1020.2" y="493.5" width="2.6" height="9"/></g>
<g fill="#1c1d1f"><rect x="1015.2" y="493.5" width="1.6" height="5"/><rect x="1018.8" y="493.5" width="1.6" height="5"/></g>
<g fill="none" stroke="#c8c8c8" stroke-width="1.1"><circle cx="1037.5" cy="498.7" r="2.6"/><circle cx="1041.5" cy="498.7" r="2.6"/></g>
<rect x="1010.4" y="509.1" width="103.8" height="28" fill="#e6e6e6"/>
<rect x="1010.4" y="537.1" width="103.8" height="5.4" fill="#6c6c6c"/>
<path d="M1082.5 113.5 L1091 109.8 C1090.2 108 1088.5 107.3 1087 107.3 C1084 107.3 1082.2 109.4 1082.2 112.2 C1082.2 115.1 1084.2 117 1086.8 117 C1088.6 117 1090.1 116.2 1091.2 115" fill="none" stroke="#111" stroke-width="2.2"/>
</svg>
<div class="lbl" style="left:1030.5px;top:86.5px;font-size:12px;color:#f0f0f0">M</div>
<div class="lbl" style="left:1083.5px;top:86.5px;font-size:12px;color:#f0f0f0">S</div>
<div class="lbl" style="left:1031px;top:104.5px;font-size:12.5px;color:#3e4042;font-weight:normal">L</div>
<div class="lbl" style="left:1058.3px;top:137.5px;font-size:10px;color:#f0f0f0">C</div>
<div class="a" style="left:1024.5px;top:425px;font-size:10.5px;font-weight:bold;color:#f0f0f0">-1.75</div>
<div class="a" style="left:1080px;top:424px;font-size:11px;font-weight:bold;color:#e8e8e8">-oo</div>
<div class="lbl" style="left:1030.5px;top:448px;font-size:12.5px;color:#f0f0f0">R</div>
<div class="lbl" style="left:1082px;top:448px;font-size:12.5px;color:#f0f0f0">W</div>
<div class="lbl" style="left:1097.3px;top:492px;font-size:12px;color:#f0f0f0">10</div>
<div class="a" style="left:1014.5px;top:511px;width:102px;font-size:11.2px;line-height:14px;color:#1a1a1a">Modern Hip Hop Kit 6</div>
<div class="a" style="left:0;top:0;width:1128px;height:557px;border:1px solid #3e4144;border-radius:6px 6px 4px 4px;pointer-events:none"></div>
</div>
</body></html>
